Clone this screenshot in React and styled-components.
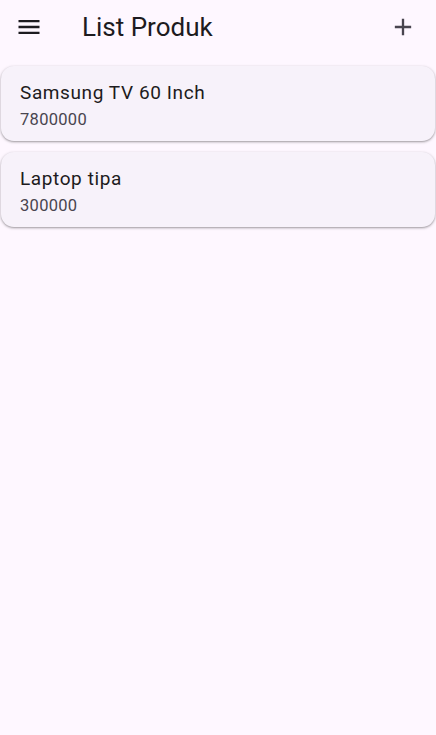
import styled, { createGlobalStyle } from 'styled-components';

const GlobalStyle = createGlobalStyle`
  html, body {
    margin: 0;
    padding: 0;
    background: #fef7ff;
    font-family: Roboto, "Noto Sans", sans-serif;
  }
`;

const Page = styled.div`
  width: 436px;
  min-height: 735px;
  background: #fef7ff;
`;

const AppBar = styled.header`
  display: flex;
  align-items: center;
  height: 54px;
  padding: 0 10px 0 6px;
  box-sizing: border-box;
`;

const IconButton = styled.button`
  display: flex;
  align-items: center;
  justify-content: center;
  width: 46px;
  height: 46px;
  padding: 0;
  border: none;
  background: transparent;
  color: ${(p) => p.color || '#1d1b20'};
`;

const Title = styled.h1`
  flex: 1;
  margin: 0 0 0 30px;
  font-size: 26px;
  font-weight: 400;
  color: #1d1b20;
  line-height: 1;
`;

const List = styled.div`
  display: flex;
  flex-direction: column;
  gap: 11px;
  padding: 12px 1px;
`;

const Card = styled.div`
  display: flex;
  flex-direction: column;
  height: 75px;
  padding: 13px 19px 0;
  box-sizing: border-box;
  background: #f7f2fa;
  border-radius: 13px;
  box-shadow: 0 1px 2px rgba(0, 0, 0, 0.3), 0 1px 3px 1px rgba(0, 0, 0, 0.08);
`;

const ItemName = styled.div`
  font-size: 19px;
  letter-spacing: 0.6px;
  color: #1d1b20;
  line-height: 28px;
`;

const ItemPrice = styled.div`
  font-size: 16.5px;
  letter-spacing: 0.3px;
  color: #49454f;
  line-height: 26px;
`;

const products = [
  { name: 'Samsung TV 60 Inch', price: 7800000 },
  { name: 'Laptop tipa', price: 300000 },
];

const App = () => {
  return (
    <Page>
      <GlobalStyle />
      <AppBar>
        <IconButton aria-label="menu">
          <svg width="28" height="28" viewBox="0 0 24 24" fill="currentColor">
            <path d="M3 18h18v-2H3v2zm0-5h18v-2H3v2zm0-7v2h18V6H3z" />
          </svg>
        </IconButton>
        <Title>List Produk</Title>
        <IconButton aria-label="tambah" color="#49454f">
          <svg width="28" height="28" viewBox="0 0 24 24" fill="currentColor">
            <path d="M19 13h-6v6h-2v-6H5v-2h6V5h2v6h6v2z" />
          </svg>
        </IconButton>
      </AppBar>
      <List>
        {products.map((p) => (
          <Card key={p.name}>
            <ItemName>{p.name}</ItemName>
            <ItemPrice>{p.price}</ItemPrice>
          </Card>
        ))}
      </List>
    </Page>
  );
};

export default App;
